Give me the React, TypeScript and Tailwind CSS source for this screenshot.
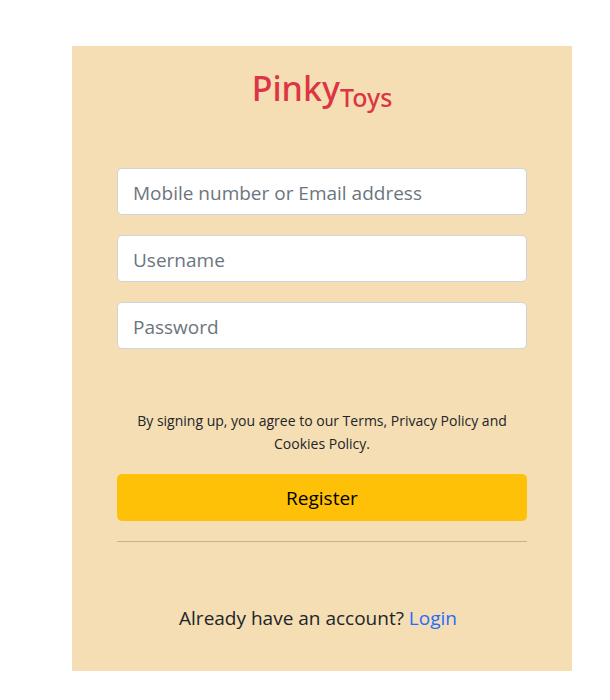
import React from "react";

const fields = [
  { id: "contact", label: "Mobile number or Email address", type: "text" },
  { id: "username", label: "Username", type: "text" },
  { id: "password", label: "Password", type: "password" },
];

export default function App() {
  return (
    <main className="pt-[46px] pr-[38px] pl-[72px] font-['Open_Sans','Noto_Sans',sans-serif] text-[#212529]">
      <form className="bg-[#f5deb3] px-[45px] pt-[18px] pb-[38px] text-center" onSubmit={(e) => e.preventDefault()}>
        <h1 className="font-['Noto_Sans','Open_Sans',sans-serif] text-[34px] leading-[48px] font-medium text-[#dc3545]">
          Pinky<sub className="text-[25px]">Toys</sub>
        </h1>
        <div className="mt-14 flex flex-col gap-5">
          {fields.map((f) => (
            <input
              key={f.id}
              id={f.id}
              type={f.type}
              aria-label={f.label}
              placeholder={f.label}
              className="block h-[47px] w-full rounded-[5px] border border-[#ced4da] bg-white px-[15px] pt-0.5 text-[19px] placeholder:text-[#6c757d]"
            />
          ))}
        </div>
        <p className="mt-[60px] px-3 text-sm leading-[23px]">
          By signing up, you agree to our Terms, Privacy Policy and Cookies Policy.
        </p>
        <button type="submit" className="mt-[19px] block h-[47px] w-full rounded-[5px] bg-[#ffc107] pt-0.5 text-[19px] text-black">
          Register
        </button>
        <hr className="mt-5 border-[#c4b18f]" />
        <p className="mt-[61px] pr-2 text-[19px] leading-[30px]">
          Already have an account? <a href="#login" className="text-[#256cff]">Login</a>
        </p>
      </form>
    </main>
  );
}
